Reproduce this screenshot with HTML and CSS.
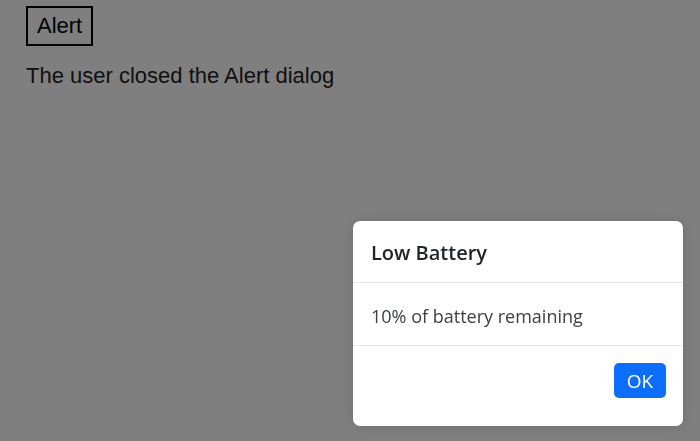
FILE: index.html
```html
<!DOCTYPE html>
<html>
<head>
<meta charset="utf-8">
<link rel="stylesheet" href="styles.css">
</head>
<body>
<main class="page">
  <button class="alert-btn">Alert</button>
  <p class="status">The user closed the Alert dialog</p>
</main>
<div class="overlay">
  <div class="dialog">
    <div class="dialog-header">Low Battery</div>
    <div class="dialog-body">10% of battery remaining</div>
    <div class="dialog-footer"><button class="ok-btn">OK</button></div>
  </div>
</div>
</body>
</html>
```
FILE: styles.css
```css
html, body { margin: 0; padding: 0; background: #fff; }
.page {
  padding: 6px 26px;
  font-family: "Liberation Sans", Arial, sans-serif;
  color: #000;
}
.alert-btn {
  font-family: "Liberation Sans", Arial, sans-serif;
  font-size: 22px;
  line-height: 24px;
  padding: 6px 9px;
  border: 2px solid #000;
  background: #fff;
  color: #000;
  border-radius: 0;
  display: block;
}
.status {
  margin: 17px 0 0;
  font-size: 22px;
  line-height: 26px;
  color: #222;
}
.overlay {
  position: fixed;
  inset: 0;
  background: rgba(0,0,0,0.5);
  display: flex;
  justify-content: flex-end;
  align-items: flex-end;
  padding: 0 17px 15px 0;
}
.dialog {
  width: 330px;
  background: #fff;
  border-radius: 7px;
  box-shadow: 0 0 14px rgba(0,0,0,0.15);
  font-family: "Open Sans", "Noto Sans", sans-serif;
  overflow: hidden;
}
.dialog-header {
  height: 62px;
  box-sizing: border-box;
  padding: 2px 18px 0;
  display: flex;
  align-items: center;
  font-size: 20px;
  font-weight: 600;
  color: #212529;
  border-bottom: 1px solid #e3e6ea;
}
.dialog-body {
  height: 63px;
  box-sizing: border-box;
  padding: 3px 18px 0;
  display: flex;
  align-items: center;
  font-size: 18px;
  color: #3c4043;
  border-bottom: 1px solid #e3e6ea;
}
.dialog-footer {
  height: 80px;
  box-sizing: border-box;
  display: flex;
  justify-content: flex-end;
  align-items: flex-start;
  padding: 17px 17px 0 0;
}
.ok-btn {
  width: 52px;
  height: 35px;
  border: none;
  border-radius: 5px;
  background: #0d6efd;
  color: #fff;
  font-family: "Open Sans", "Noto Sans", sans-serif;
  font-size: 19px;
  padding: 0;
}
```
